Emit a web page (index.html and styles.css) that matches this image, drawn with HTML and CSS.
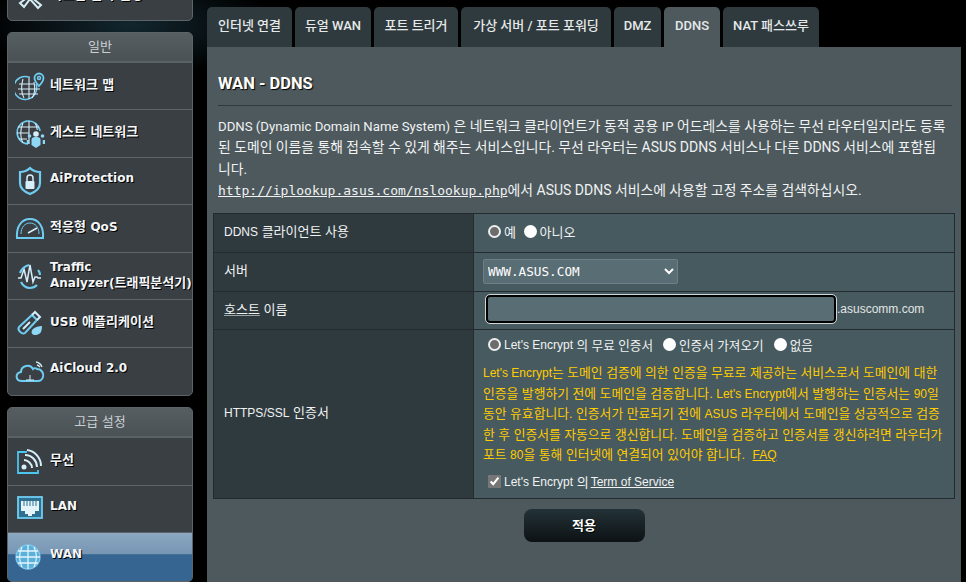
FILE: index.html
```html
<!DOCTYPE html>
<html lang="ko">
<head>
<meta charset="utf-8">
<title>WAN - DDNS</title>
<link rel="stylesheet" href="styles.css">
</head>
<body>
<div class="page">
  <nav class="sidebar">
    <section class="panel panel-top">
      <div class="menu-item">
        <svg class="icon" viewBox="0 0 30 30"><path d="M5 22l8-6 2 2-6 8zM14 17l9 10 3-3-10-8" fill="none" stroke="#d8eef6" stroke-width="2"/></svg>
        <span class="label">시스템 관리 설정</span>
      </div>
    </section>
    <section class="panel">
      <h2 class="panel-title">일반</h2>
      <div class="menu-item">
        <svg class="icon" viewBox="0 0 30 30" fill="none" stroke="#6fcdf2" stroke-width="1.500"><path d="M21 13a11.500 11.500 0 1 1-6-6.500"/><path d="M3 18h22M4 13h15M4 23h19M14 7v21M8 8c-2 6-2 14 1 19M19 11c1 5 1 12-2 16" stroke="#d5eefa" stroke-width="1.100"/><path d="M28.500 7c0 3-4.500 8-4.500 8s-4.500-5-4.500-8a4.500 4.500 0 0 1 9 0z" fill="#3a3f43" stroke-width="1.800"/><circle cx="24" cy="7" r="1.500"/></svg>
        <span class="label">네트워크 맵</span>
      </div>
      <div class="menu-item">
        <svg class="icon" viewBox="0 0 30 30" fill="none" stroke="#6fcdf2" stroke-width="1.500"><path d="M13 26a11.500 11.500 0 1 1 12-13"/><path d="M2 15h12M3 9h21M4 21h8M14 3v23M8 5c-3 6-3 15 0 20M20 5c1.500 2 2 5 2.300 7" stroke="#d5eefa" stroke-width="1.100"/><circle cx="21" cy="16" r="2.800" fill="#d5eefa" stroke="none"/><path d="M16.500 27v-5c0-2 1-3 4.500-3s4.500 1 4.500 3v5l-4.500 3z" fill="#8fd8f5" stroke="none"/><circle cx="14.500" cy="18" r="1.800" fill="#8fd8f5" stroke="none"/><circle cx="27.500" cy="18" r="1.800" fill="#8fd8f5" stroke="none"/><path d="M13 26v-4M29 26v-4" stroke="#8fd8f5" stroke-width="2.500"/></svg>
        <span class="label">게스트 네트워크</span>
      </div>
      <div class="menu-item">
        <svg class="icon" viewBox="0 0 30 30" fill="none" stroke="#6fcdf2" stroke-width="2.200"><path d="M15 2c3 3 6 4 10 4v11c0 6-5 9-10 11C10 26 5 23 5 17V6c4 0 7-1 10-4z"/><rect x="10.500" y="15" width="9" height="8" rx="1" fill="#d5eefa" stroke="none"/><path d="M12 15v-3a3 3 0 0 1 6 0v3" stroke="#d5eefa" stroke-width="1.500"/></svg>
        <span class="label label-lat lat">AiProtection</span>
      </div>
      <div class="menu-item">
        <svg class="icon" viewBox="0 0 30 30" fill="none" stroke="#6fcdf2" stroke-width="2"><path d="M2 25c-1-12 5-19 13-19s14 7 13 19z"/><path d="M6 21c0-7 4-11 9-11s9 4 9 11" stroke-width="1"/><path d="M13 20l9-5" stroke="#d5eefa" stroke-width="1.500"/></svg>
        <span class="label">적응형 <span class="lat">QoS</span></span>
      </div>
      <div class="menu-item">
        <svg class="icon" viewBox="0 0 30 30" fill="none" stroke="#6fcdf2" stroke-width="1.500"><path d="M3 17h3l3-9 3 13 3-17 3 17 2-5h2l1 1h3" stroke="#d5eefa"/><path d="M5 12C7 7 10 5 14 4M23 9c1 1 2 3 2 5M6 21c2 4 5 6 9 6 3 0 5-1 7-3" stroke-width="2.200"/></svg>
        <span class="label"><span class="lat">Traffic</span><br><span class="lat">Analyzer(</span>트래픽분석기<span class="lat">)</span></span>
      </div>
      <div class="menu-item">
        <svg class="icon" viewBox="0 0 30 30" fill="none" stroke="#6fcdf2" stroke-width="2"><path d="M4 19L17 7l5 5L10 25c-3 2-8-3-6-6z"/><path d="M17 7l3-3 5 5-3 3" stroke="#d5eefa"/><path d="M8 21l7-7" stroke="#d5eefa"/><path d="M19 27c-3-1-3-4-1-6s6-3 9-3c0 4-1 7-3 8s-3 1-5 1z" fill="#8fd8f5" stroke="none"/></svg>
        <span class="label"><span class="lat">USB</span> 애플리케이션</span>
      </div>
      <div class="menu-item">
        <svg class="icon" viewBox="0 0 30 30" fill="none" stroke="#6fcdf2" stroke-width="2"><path d="M7 25c-7 0-7-8-1-9 0-6 9-9 12-3 1-1 3-1 4 0 5 0 7 5 6 8-1 3-3 4-5 4z"/><path d="M11 24h8M15 19v5" stroke="#d5eefa" stroke-width="1"/><path d="M21 6c2 0 5 2 6 5M22 9c1 0 2 1 3 2" stroke="#d5eefa" stroke-width="1.300"/></svg>
        <span class="label label-lat lat">AiCloud 2.0</span>
      </div>
    </section>
    <section class="panel">
      <h2 class="panel-title">고급 설정</h2>
      <div class="menu-item">
        <svg class="icon" viewBox="0 0 30 30" fill="none" stroke="#6fcdf2" stroke-width="1.800"><path d="M12 6H3v21h20v-3" stroke="#4cc4f0"/><circle cx="9" cy="21" r="2.500" fill="#d5eefa" stroke="none"/><path d="M9 14c4 0 8 4 8 8M10 9c7 0 12 6 12 12M12 4c8 1 14 8 14 16" stroke="#d5eefa" stroke-width="2"/></svg>
        <span class="label">무선</span>
      </div>
      <div class="menu-item">
        <svg class="icon" viewBox="0 0 30 30"><rect x="3" y="3" width="24" height="21" fill="#2f6f90" stroke="#6fcdf2" stroke-width="1.800"/><path d="M6 7h18v10h-4v3h-3v2h-4v-2h-3v-3H6z" fill="#e4f4fb"/><path d="M9 7v5M12 7v5M15 7v5M18 7v5M21 7v5" stroke="#2f6f90"/></svg>
        <span class="label label-lat lat">LAN</span>
      </div>
      <div class="menu-item menu-item-active">
        <svg class="icon" viewBox="0 0 30 30" fill="none" stroke="#e4f4fb" stroke-width="1.300"><circle cx="13" cy="15" r="12" fill="#5bb0da" stroke="#7cc6ea"/><path d="M1 15h24M3 9h20M3 21h20M13 3v24M7 5c-3 6-3 14 0 20M19 5c3 6 3 14 0 20"/></svg>
        <span class="label label-lat lat">WAN</span>
      </div>
    </section>
  </nav>
  <main class="main">
    <div class="tabs">
      <a class="tab tab-1">인터넷 연결</a>
      <a class="tab tab-2">듀얼 WAN</a>
      <a class="tab tab-3">포트 트리거</a>
      <a class="tab tab-4">가상 서버 / 포트 포워딩</a>
      <a class="tab tab-5">DMZ</a>
      <a class="tab tab-6 tab-active">DDNS</a>
      <a class="tab tab-7">NAT 패스쓰루</a>
    </div>
    <div class="content">
      <h1 class="heading">WAN - DDNS</h1>
      <p class="intro"><span class="lat">DDNS (Dynamic Domain Name System)</span> 은 네트워크 클라이언트가 동적 공용 <span class="lat">IP</span> 어드레스를 사용하는 무선 라우터일지라도 등록된 도메인 이름을 통해 접속할 수 있게 해주는 서비스입니다. 무선 라우터는 <span class="brand">ASUS DDNS</span> 서비스나 다른 <span class="brand">DDNS</span> 서비스에 포함됩니다.<br><a class="mono-link">http://iplookup.asus.com/nslookup.php</a>에서 <span class="brand">ASUS DDNS</span> 서비스에 사용할 고정 주소를 검색하십시오.</p>
      <table class="form">
        <tr class="row-1">
          <th><span class="lat">DDNS</span> 클라이언트 사용</th>
          <td>
            <label class="choice"><input class="radio" type="radio" name="ddns" checked>예</label>
            <label class="choice"><input class="radio" type="radio" name="ddns">아니오</label>
          </td>
        </tr>
        <tr class="row-2">
          <th>서버</th>
          <td><select class="select"><option>WWW.ASUS.COM</option></select></td>
        </tr>
        <tr class="row-3">
          <th><span class="help">호스트</span> 이름</th>
          <td class="host-cell"><input class="host" type="text"><span class="suffix">.asuscomm.com</span></td>
        </tr>
        <tr class="row-4">
          <th><span class="lat">HTTPS/SSL</span> 인증서</th>
          <td>
            <div class="cert-choices">
              <label class="choice"><input class="radio" type="radio" name="cert" checked><span class="lat">Let's Encrypt</span>&nbsp;의 무료 인증서</label>
              <label class="choice"><input class="radio" type="radio" name="cert">인증서 가져오기</label>
              <label class="choice"><input class="radio" type="radio" name="cert">없음</label>
            </div>
            <p class="note"><span class="lat">Let's Encrypt</span>는 도메인 검증에 의한 인증을 무료로 제공하는 서비스로서 도메인에 대한 인증을 발행하기 전에 도메인을 검증합니다. <span class="lat">Let's Encrypt</span>에서 발행하는 인증서는 <span class="lat">90</span>일 동안 유효합니다. 인증서가 만료되기 전에 <span class="lat">ASUS</span> 라우터에서 도메인을 성공적으로 검증한 후 인증서를 자동으로 갱신합니다. 도메인을 검증하고 인증서를 갱신하려면 라우터가 포트 <span class="lat">80</span>을 통해 인터넷에 연결되어 있어야 합니다. <a class="faq lat">FAQ</a></p>
            <label class="agree"><input class="check" type="checkbox" checked><span class="lat">Let's Encrypt</span>&nbsp;의 <a class="tos lat">Term of Service</a></label>
          </td>
        </tr>
      </table>
      <div class="actions"><button class="apply">적용</button></div>
    </div>
  </main>
</div>
</body>
</html>
```

FILE: styles.css
```css
* { box-sizing: border-box; }
html, body { margin: 0; padding: 0; height: 582px; overflow: hidden; background: #000; }
body {
  font-family: "Liberation Sans", "Noto Sans CJK KR", sans-serif;
  background: radial-gradient(ellipse 150px 50px at 130px 25px, #12262e 0%, #000 100%);
}
.page { display: flex; height: 582px; overflow: hidden; align-items: flex-start; }
.lat { font-size: .925em; }

.sidebar { width: 186px; margin-left: 7px; margin-top: -29px; flex: none; display: flex; flex-direction: column; gap: 11px; }
.panel { border: 1px solid #5b6468; border-radius: 5px; background: #3a3f43; overflow: hidden; }
.panel-title {
  margin: 0; height: 30px; text-align: center;
  font: 400 13px/28px "Liberation Sans", "Noto Sans CJK KR", sans-serif;
  color: #c9cfd2;
  background: linear-gradient(#565e62, #4a5256);
  border-bottom: 2px solid #5a6266;
}
.menu-item {
  height: 47.500px; display: flex; align-items: center; gap: 5px; padding-left: 7px;
  border-bottom: 1px solid #5e6569;
}
.menu-item:last-child { border-bottom: 0; }
.panel-top .menu-item { border-bottom: 0; }
.icon { width: 30px; height: 30px; flex: none; }
.label {
  font: 700 13px/16px "DejaVu Sans", "Noto Sans CJK KR", sans-serif;
  color: #f4f6f7; text-shadow: 1px 1px 0 #000; white-space: nowrap;
  position: relative; top: -1px;
}
.label-lat { font-size: 12px; top: -3px; }
.menu-item-active { background: linear-gradient(#8ba7c1 0, #7796b3 44%, #366592 45%, #366592 100%); border-bottom: 0; }

.main { width: 754px; margin-left: 14px; margin-top: 7px; flex: none; }
.tabs { display: flex; gap: 3px; height: 40px; }
.tab {
  height: 40px; text-align: center; background: #2f3a3e;
  border-radius: 5px 5px 0 0; color: #e6e9ea; white-space: nowrap;
  font: 500 13px/38px Roboto, "Noto Sans CJK KR", sans-serif;
}
.tab-1 { width: 85px; }
.tab-2 { width: 76px; }
.tab-3 { width: 84px; }
.tab-4 { width: 150px; }
.tab-5 { width: 47px; }
.tab-6 { width: 56px; }
.tab-7 { width: 96px; }
.tab-active { background: #4d595d; }

.content { height: 535px; background: #4d595d; padding: 26px 9px 0 6px; }
.heading {
  margin: 0 0 0 5px; height: 33px;
  font: 700 16.500px/22px Roboto, "Noto Sans CJK KR", sans-serif;
  color: #fff; text-shadow: 1px 1px 1px #000;
  border-bottom: 1px solid #2f3a3e;
  width: 734px;
}
.intro {
  margin: 10px 0 0 5px; width: 730px;
  font: 400 13.850px/21.300px Roboto, "Noto Sans CJK KR", sans-serif;
  color: #f0f2f3;
}
.intro .lat { font-size: 13.200px; }
.intro .brand { font-size: 14px; }
.mono-link {
  font: 400 13px/21px "DejaVu Sans Mono", monospace; text-decoration: underline; color: #f0f2f3;
}

.form { margin-top: 12px; width: 742px; border-collapse: collapse; table-layout: fixed; border: 1px solid #2a3236; font-size: 13px; color: #f0f2f3; }
.form th, .form td { border: 1px solid #232b2f; }
.form th {
  width: 260px; background: #2f3a3e; padding: 0 0 5px 10px; text-align: left; font-weight: 400;
  font-family: "Liberation Sans", "Noto Sans CJK KR", sans-serif; color: #f0f2f3;
}
.form td { background: #475a5f; padding: 0 0 0 9px; }
.row-1 { height: 39px; }
.row-2 { height: 39px; }
.row-3 { height: 38px; }
.row-4 { height: 169px; }
.form .row-1 td, .form .row-3 td { padding-bottom: 4px; }
.form .row-2 td { padding-bottom: 2px; }
.help { text-decoration: underline; text-decoration-color: #9aa4a8; }

.choice { display: inline-flex; align-items: center; color: #f0f2f3; white-space: nowrap; }
.radio {
  appearance: none; width: 13px; height: 13px; border-radius: 50%; margin: 0 3px 0 5px; flex: none;
  background: #fff;
}
.radio:checked { background: #6c6c6c; border: 2px solid #eee; }
.choice + .choice .radio { margin-left: 4px; }
.select {
  width: 195px; height: 25px; background-color: #596d74; border: 1px solid #6e7e84; border-radius: 2px;
  color: #fff; font: 400 12.700px "DejaVu Sans Mono", monospace; padding-left: 0; display: block;
}
.host-cell { white-space: nowrap; }
.host {
  width: 350px; height: 28px; background: #596d74; border: 2px solid #000; border-radius: 4px;
  outline: 1px solid #cfd4d6; margin-left: 3px; vertical-align: middle; color: #fff;
}
.suffix { color: #e2e5e6; vertical-align: middle; font-size: 12px; margin-left: 1px; }
.cert-choices { height: 29px; display: flex; align-items: center; gap: 6px; font-size: 12.600px; }
.cert-choices .lat { font-size: 12px; }
.note { margin: 4px 0 0; width: 462px; color: #ffcc00; font-size: 12.800px; line-height: 20.500px; }
.note .lat { font-size: 12px; }
.faq { color: #ffcc00; text-decoration: underline; margin-left: 4px; }
.agree { display: flex; align-items: center; height: 32px; color: #f0f2f3; white-space: nowrap; }
.check { width: 13px; height: 13px; margin: 0 3px 0 5px; accent-color: #767676; flex: none; }
.tos { text-decoration: underline; margin-left: 2px; }

.actions { display: flex; justify-content: center; margin-top: 10px; padding-left: 3px; }
.apply {
  width: 121px; height: 33px; border: 0; border-radius: 8px; color: #fff; padding: 0 0 2px;
  background: linear-gradient(#233237, #0d1214);
  font: 700 13px "Liberation Sans", "Noto Sans CJK KR", sans-serif;
  text-shadow: 1px 1px 0 #000;
}
```
